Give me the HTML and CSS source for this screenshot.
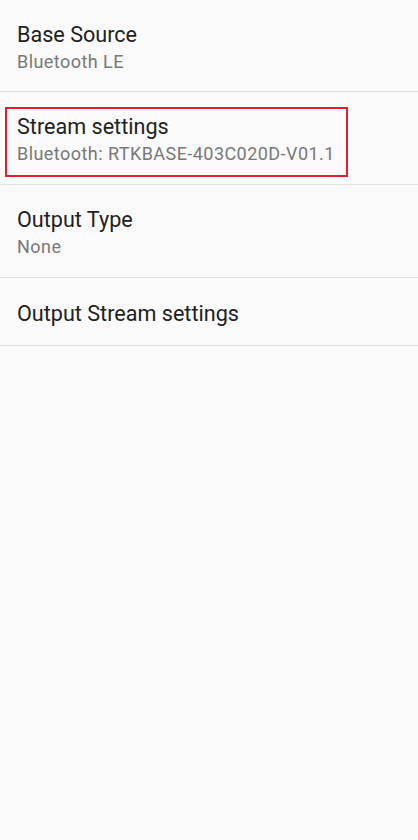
FILE: index.html
```html
<!doctype html>
<html>
<head>
<meta charset="utf-8">
<title>Base settings</title>
<link rel="stylesheet" href="styles.css">
</head>
<body>

<ul class="prefList">
  <li class="pref">
    <div class="prefText">
      <span class="prefTitle">Base Source</span>
      <span class="prefSummary">Bluetooth LE</span>
    </div>
  </li>
  <li class="pref">
    <!-- highlighted row -->
    <div class="prefText marked">
      <span class="prefTitle">Stream settings</span>
      <span class="prefSummary">Bluetooth: RTKBASE-403C020D-V01.1</span>
    </div>
  </li>
  <li class="pref">
    <div class="prefText">
      <span class="prefTitle">Output Type</span>
      <span class="prefSummary">None</span>
    </div>
  </li>
  <li class="pref single">
    <div class="prefText">
      <span class="prefTitle">Output Stream settings</span>
    </div>
  </li>
</ul>

</body>
</html>
```

FILE: styles.css
```css
/* ---------- page ---------- */
html,body{margin:0;padding:0;background:#fafafa}
body{
  width:418px;min-height:840px;
  font-family:Roboto,"Noto Sans",sans-serif;
}

/* ---------- preference list ---------- */
.prefList{list-style:none;margin:0;padding:0}

.pref{
  height:92px;
  display:flex;align-items:center;
  padding:0 17px;
  border-bottom:1px solid #e1e1e1;
}
.pref:first-child{height:91px}
.pref.single{height:67px}

.prefText{display:flex;flex-direction:column;margin-top:5px}

.prefTitle{
  font-size:21.6px;line-height:26px;
  color:#212121;
}
.prefSummary{
  font-size:18px;line-height:27px;
  letter-spacing:.45px;
  color:#787878;
}

/* red annotation frame */
.marked{
  margin:8px 0 0 -12px;
  padding:5px 11px 8px 10px;
  border:2px solid #e21e2b;
}
```
